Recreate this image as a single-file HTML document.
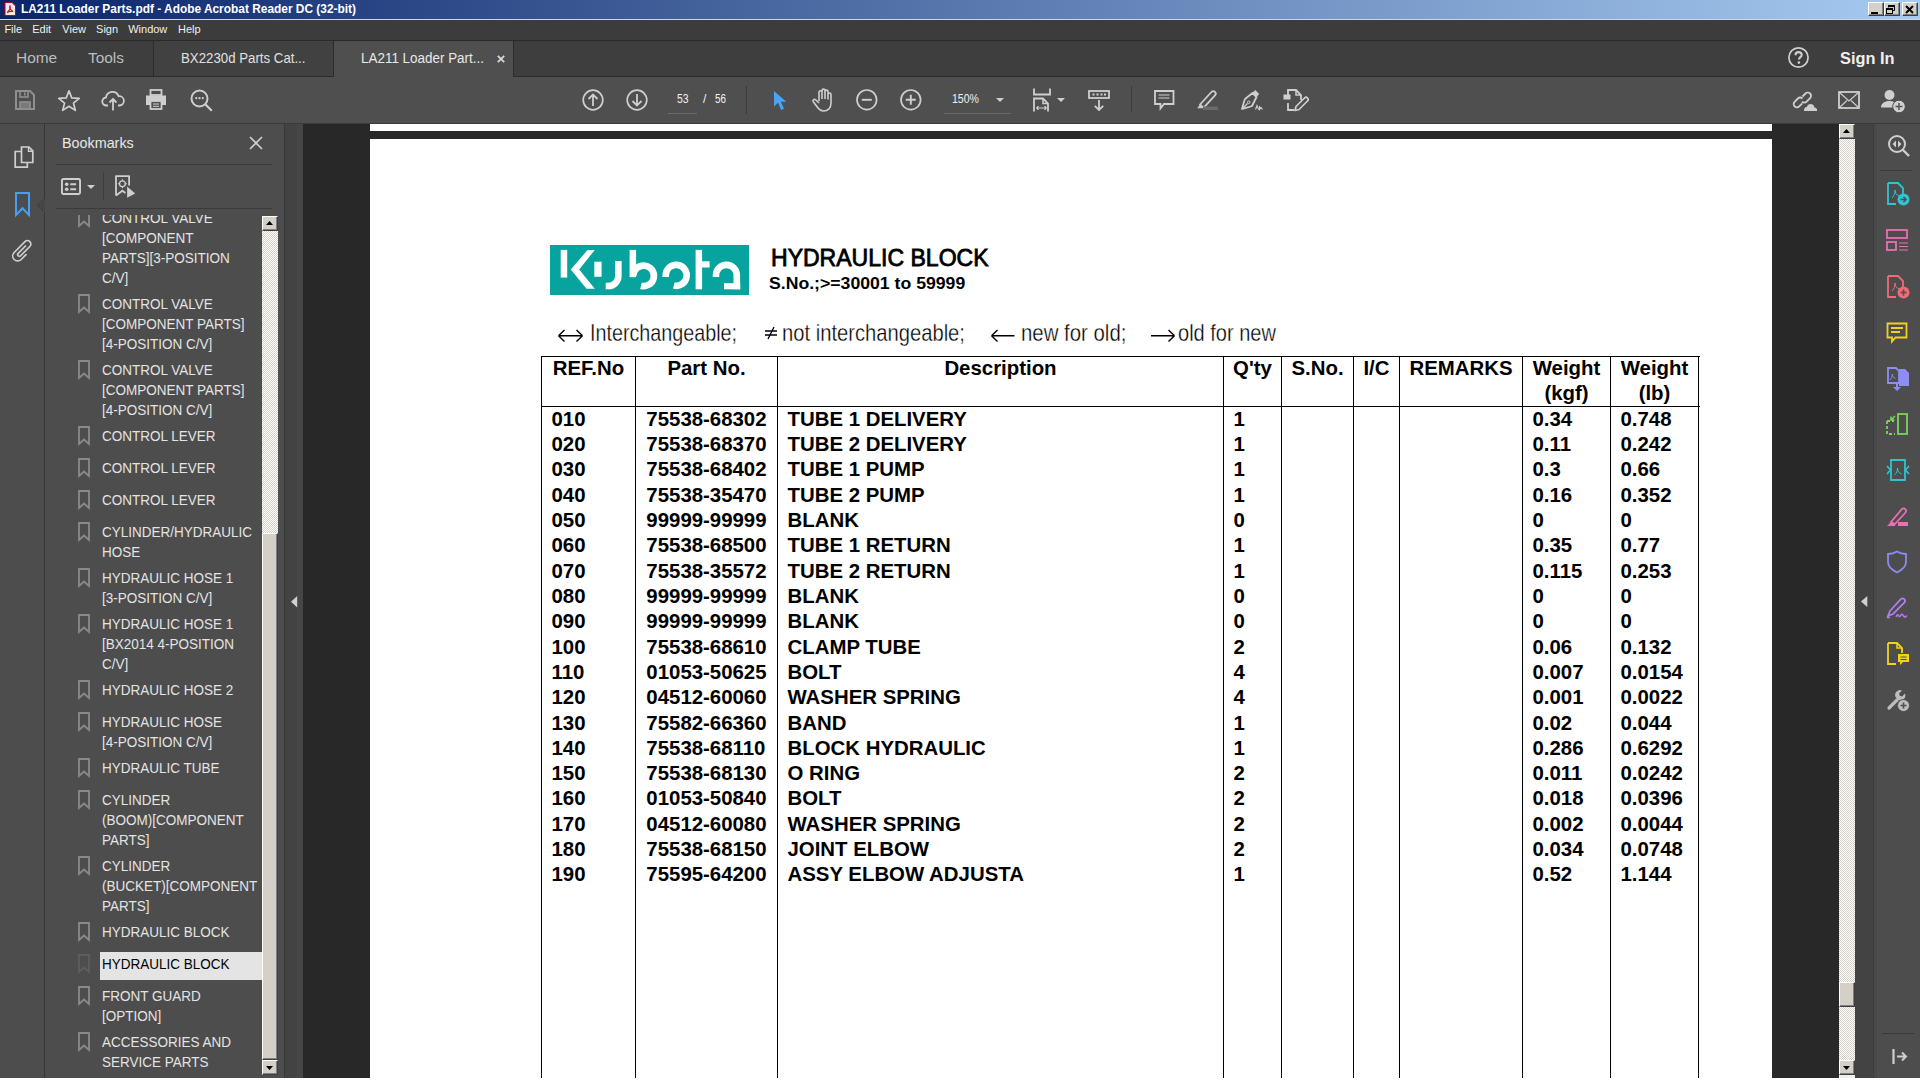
<!DOCTYPE html><html><head><meta charset="utf-8"><style>
*{box-sizing:border-box;margin:0;padding:0}
html,body{width:1920px;height:1080px;overflow:hidden;background:#f0f0f0;font-family:"Liberation Sans",sans-serif}
.a{position:absolute}
.t{position:absolute;white-space:nowrap;line-height:1}
svg{position:absolute;overflow:visible}
</style></head><body><div class="a" style="left:0px;top:0px;width:1920px;height:19px;background:linear-gradient(90deg,#0a246a 0%,#a6caf0 100%)"></div>
<div class="a" style="left:0px;top:19px;width:1920px;height:1px;background:#c8d8ec"></div>
<svg style="left:4px;top:2px" width="12" height="14" viewBox="0 0 12 14"><path d="M1 0.5h7l3.5 3.5v9.5h-10.5z" fill="#fbe7e7" stroke="#b0080f" stroke-width="1"/><path d="M3 10.5c2-1 4-4.5 3-6.5c-1 1 0 4 3 5.5c-2-0.3-4 0-6 1z" fill="none" stroke="#d4141c" stroke-width="1.2"/></svg>
<div class="t" style="left:20.5px;top:3.14px;font-size:12px;color:#fff;font-weight:bold;transform:scaleX(0.9915349553069318);transform-origin:0 0;letter-spacing:0px">LA211 Loader Parts.pdf - Adobe Acrobat Reader DC (32-bit)</div>
<div class="a" style="left:1868px;top:2px;width:16px;height:14px;background:#d4d0c8;border-top:1px solid #fff;border-left:1px solid #fff;border-right:1px solid #404040;border-bottom:1px solid #404040;box-shadow:inset -1px -1px #808080"></div>
<div class="a" style="left:1884px;top:2px;width:16px;height:14px;background:#d4d0c8;border-top:1px solid #fff;border-left:1px solid #fff;border-right:1px solid #404040;border-bottom:1px solid #404040;box-shadow:inset -1px -1px #808080"></div>
<div class="a" style="left:1902px;top:2px;width:16px;height:14px;background:#d4d0c8;border-top:1px solid #fff;border-left:1px solid #fff;border-right:1px solid #404040;border-bottom:1px solid #404040;box-shadow:inset -1px -1px #808080"></div>
<div class="a" style="left:1871px;top:12px;width:7px;height:2px;background:#000"></div>
<svg style="left:1886px;top:5px" width="9" height="9" viewBox="0 0 9 9"><path d="M2.5 0.5h6v5h-2 M2.5 0.5v2" fill="none" stroke="#000" stroke-width="1"/><rect x="2" y="0" width="7" height="2" fill="#000"/><rect x="0.5" y="3.5" width="6" height="5" fill="none" stroke="#000"/><rect x="0" y="3" width="7" height="2" fill="#000"/></svg>
<svg style="left:1905px;top:4.5px" width="9" height="9" viewBox="0 0 9 9"><path d="M1 1L8 8M8 1L1 8" stroke="#000" stroke-width="2"/></svg>
<div class="a" style="left:0px;top:20px;width:1920px;height:20px;background:#3c3c3c"></div>
<div class="a" style="left:0px;top:40px;width:1920px;height:1px;background:#2a2a2a"></div>
<div class="t" style="left:4.4px;top:23.55px;font-size:11px;color:#f0f0f0;font-weight:normal;">File</div>
<div class="t" style="left:32.2px;top:23.55px;font-size:11px;color:#f0f0f0;font-weight:normal;">Edit</div>
<div class="t" style="left:62.300000000000004px;top:23.55px;font-size:11px;color:#f0f0f0;font-weight:normal;">View</div>
<div class="t" style="left:96.10000000000001px;top:23.55px;font-size:11px;color:#f0f0f0;font-weight:normal;">Sign</div>
<div class="t" style="left:128.2px;top:23.55px;font-size:11px;color:#f0f0f0;font-weight:normal;">Window</div>
<div class="t" style="left:178.0px;top:23.55px;font-size:11px;color:#f0f0f0;font-weight:normal;">Help</div>
<div class="a" style="left:0px;top:41px;width:1920px;height:36px;background:#3e3e3e"></div>
<div class="a" style="left:0px;top:76px;width:1920px;height:1px;background:#2c2c2c"></div>
<div class="t" style="left:16.3px;top:49.92px;font-size:15px;color:#bdbdbd;font-weight:normal;transform:scaleX(1.0287141073657928);transform-origin:0 0;">Home</div>
<div class="t" style="left:88px;top:49.92px;font-size:15px;color:#bdbdbd;font-weight:normal;transform:scaleX(1.0278372591006424);transform-origin:0 0;">Tools</div>
<div class="a" style="left:153px;top:41px;width:1px;height:36px;background:#2c2c2c"></div>
<div class="a" style="left:154px;top:41px;width:180px;height:35px;background:#414141"></div>
<div class="t" style="left:181.3px;top:51.13px;font-size:14px;color:#e0e0e0;font-weight:normal;transform:scaleX(0.9465521173876682);transform-origin:0 0;">BX2230d Parts Cat...</div>
<div class="a" style="left:333px;top:41px;width:1px;height:36px;background:#2c2c2c"></div>
<div class="a" style="left:334px;top:41px;width:179px;height:37px;background:#4f4f4f"></div>
<div class="t" style="left:361px;top:51.13px;font-size:14px;color:#e8e8e8;font-weight:normal;transform:scaleX(0.9596629476476556);transform-origin:0 0;">LA211 Loader Part...</div>
<svg style="left:497px;top:54.5px" width="8" height="8" viewBox="0 0 8 8"><path d="M0.8 0.8L7.2 7.2M7.2 0.8L0.8 7.2" stroke="#d8d8d8" stroke-width="1.8"/></svg>
<div class="a" style="left:513px;top:41px;width:1px;height:36px;background:#2c2c2c"></div>
<svg style="left:1788px;top:47px" width="22" height="22" viewBox="0 0 22 22"><circle cx="10.5" cy="10.5" r="9.6" fill="none" stroke="#cfcfcf" stroke-width="1.7"/><path d="M7.5 8.2c0-1.9 1.3-3.1 3.1-3.1s3.1 1.1 3.1 2.8c0 2.2-2.7 2.3-2.7 4.5" fill="none" stroke="#cfcfcf" stroke-width="2.1"/><circle cx="10.9" cy="15.6" r="1.3" fill="#cfcfcf"/></svg>
<div class="t" style="left:1839.5px;top:51.32px;font-size:16px;color:#f0f0f0;font-weight:bold;transform:scaleX(1.0208333333333333);transform-origin:0 0;">Sign In</div>
<div class="a" style="left:0px;top:77px;width:1920px;height:46px;background:#4f4f4f"></div>
<div class="a" style="left:0px;top:123px;width:1920px;height:1px;background:#3a3a3a"></div>
<svg style="left:15px;top:90px" width="20" height="20" viewBox="0 0 20 20"><path d="M1 1h14l4 4v14h-18z" fill="none" stroke="#8f8f8f" stroke-width="2"/><rect x="5" y="1" width="8" height="6" fill="none" stroke="#8f8f8f" stroke-width="1.6"/><rect x="9" y="2.5" width="1.6" height="3" fill="#8f8f8f"/><rect x="5" y="12" width="10" height="7" fill="#7a7a7a" stroke="#8f8f8f" stroke-width="1.6"/></svg>
<svg style="left:57px;top:88.6px" width="24" height="23" viewBox="0 0 24 23"><path d="M12 1.8l2.75 7.1 7.5 0.45-5.8 4.75 1.9 7.3-6.35-4.1-6.35 4.1 1.9-7.3-5.8-4.75 7.5-0.45z" fill="none" stroke="#cfcfcf" stroke-width="1.7" stroke-linejoin="round"/></svg>
<svg style="left:102px;top:90px" width="22" height="21" viewBox="0 0 22 21"><path d="M6 15.5h-1.5a4 4 0 0 1-0.5-8a6.5 6.5 0 0 1 12.6-1.3a4.6 4.6 0 0 1 1.2 9.3h-1.8" fill="none" stroke="#cfcfcf" stroke-width="1.8"/><path d="M11 20.5v-11M7.5 12.5l3.5-3.5 3.5 3.5" fill="none" stroke="#cfcfcf" stroke-width="1.8"/></svg>
<svg style="left:145px;top:89px" width="22" height="21" viewBox="0 0 22 21"><rect x="5.5" y="1" width="11" height="5" fill="none" stroke="#cfcfcf" stroke-width="1.8"/><path d="M4.5 16h-3.5v-9.5h20v9.5h-3.5" fill="#cfcfcf"/><rect x="5.5" y="12" width="11" height="8" fill="#4f4f4f" stroke="#cfcfcf" stroke-width="1.8"/><path d="M8 15h6M8 17.3h6" stroke="#cfcfcf" stroke-width="1"/></svg>
<svg style="left:190px;top:89px" width="23" height="23" viewBox="0 0 23 23"><circle cx="9.5" cy="9.5" r="8" fill="none" stroke="#cfcfcf" stroke-width="2"/><path d="M15.3 15.3l6.5 6.5" stroke="#cfcfcf" stroke-width="2.2"/><circle cx="6.3" cy="9.2" r="1.1" fill="#cfcfcf"/><circle cx="9.5" cy="9.2" r="1.1" fill="#cfcfcf"/><circle cx="12.7" cy="9.2" r="1.1" fill="#cfcfcf"/></svg>
<svg style="left:582px;top:89px" width="22" height="22" viewBox="0 0 22 22"><circle cx="11" cy="11" r="9.8" fill="none" stroke="#cfcfcf" stroke-width="1.7"/><path d="M11 17V5.5M6.5 10l4.5-4.5 4.5 4.5" fill="none" stroke="#cfcfcf" stroke-width="1.8"/></svg>
<svg style="left:626px;top:89px" width="22" height="22" viewBox="0 0 22 22"><circle cx="11" cy="11" r="9.8" fill="none" stroke="#cfcfcf" stroke-width="1.7"/><path d="M11 5v11.5M6.5 12l4.5 4.5 4.5-4.5" fill="none" stroke="#cfcfcf" stroke-width="1.8"/></svg>
<div class="t" style="left:677px;top:92.94px;font-size:12px;color:#f0f0f0;font-weight:normal;transform:scaleX(0.8708708708708708);transform-origin:0 0;">53</div>
<div class="a" style="left:668px;top:113px;width:29px;height:1px;background:#6a6a6a"></div>
<div class="t" style="left:703px;top:92.94px;font-size:12px;color:#f0f0f0;font-weight:normal;">/</div>
<div class="t" style="left:714.6px;top:92.94px;font-size:12px;color:#f0f0f0;font-weight:normal;transform:scaleX(0.8258258258258258);transform-origin:0 0;">56</div>
<div class="a" style="left:746px;top:86px;width:1px;height:28px;background:#3c3c3c"></div>
<svg style="left:773px;top:89.5px" width="14" height="21" viewBox="0 0 14 21"><path d="M1 1v15.5l4-3.8 3.2 7.3 2.8-1.2-3.1-7h5.5z" fill="#4aa3f5"/></svg>
<svg style="left:812px;top:88px" width="22" height="24" viewBox="0 0 22 24"><path d="M7 13V4.2a1.5 1.5 0 0 1 3 0V11M10 11V2.6a1.5 1.5 0 0 1 3 0V11M13 11V3.6a1.5 1.5 0 0 1 3 0V11.5M16 11.5V6.5a1.5 1.5 0 0 1 3 0v8.5c0 5-3 8-7.5 8c-3.5 0-5-2-7-5l-3.2-4.3a1.5 1.5 0 0 1 2.3-1.9L7 15" fill="none" stroke="#cfcfcf" stroke-width="1.6" stroke-linejoin="round"/></svg>
<svg style="left:856px;top:89px" width="22" height="22" viewBox="0 0 22 22"><circle cx="10.8" cy="10.8" r="9.8" fill="none" stroke="#cfcfcf" stroke-width="1.7"/><path d="M5.8 10.8h10" stroke="#cfcfcf" stroke-width="1.9"/></svg>
<svg style="left:900px;top:89px" width="22" height="22" viewBox="0 0 22 22"><circle cx="10.8" cy="10.8" r="9.8" fill="none" stroke="#cfcfcf" stroke-width="1.7"/><path d="M5.8 10.8h10M10.8 5.8v10" stroke="#cfcfcf" stroke-width="1.9"/></svg>
<div class="t" style="left:951.8px;top:92.94px;font-size:12px;color:#f0f0f0;font-weight:normal;transform:scaleX(0.87890625);transform-origin:0 0;">150%</div>
<svg style="left:996px;top:98px" width="8" height="4" viewBox="0 0 8 4"><path d="M0 0h8l-4 4z" fill="#cfcfcf"/></svg>
<div class="a" style="left:944px;top:113px;width:67px;height:1px;background:#6a6a6a"></div>
<svg style="left:1033px;top:88px" width="18" height="24" viewBox="0 0 18 24"><path d="M1 0.5v6h16v-6" fill="none" stroke="#cfcfcf" stroke-width="1.8"/><path d="M1 23.5v-13h9l5 5v8" fill="none" stroke="#cfcfcf" stroke-width="1.8"/><path d="M10 10.5v5h5" fill="none" stroke="#cfcfcf" stroke-width="1.5"/><path d="M3.5 20h10M3.5 20l2-1.8M3.5 20l2 1.8M13.5 20l-2-1.8M13.5 20l-2 1.8" stroke="#cfcfcf" stroke-width="1.2"/></svg>
<svg style="left:1057px;top:98px" width="8" height="4" viewBox="0 0 8 4"><path d="M0 0h8l-4 4z" fill="#cfcfcf"/></svg>
<svg style="left:1088px;top:90px" width="22" height="21" viewBox="0 0 22 21"><rect x="1" y="1" width="20" height="7" fill="none" stroke="#cfcfcf" stroke-width="1.8"/><path d="M4.5 4.5h2M8.5 4.5h2M12.5 4.5h2M16 4.5h2" stroke="#cfcfcf" stroke-width="2"/><path d="M11 10v10M6.8 15.8l4.2 4.2 4.2-4.2" fill="none" stroke="#cfcfcf" stroke-width="1.8"/></svg>
<div class="a" style="left:1131px;top:86px;width:1px;height:26px;background:#3c3c3c"></div>
<svg style="left:1154px;top:90px" width="21" height="21" viewBox="0 0 21 21"><path d="M1 1h18.5v13h-9.5l-3.5 4.5v-4.5h-5.5z" fill="none" stroke="#cfcfcf" stroke-width="1.8" stroke-linejoin="miter"/><path d="M4.5 5h11M4.5 8h11" stroke="#cfcfcf" stroke-width="1.2"/></svg>
<svg style="left:1196px;top:89px" width="23" height="22" viewBox="0 0 23 22"><path d="M4 15.5L15.5 3a2.4 2.4 0 0 1 3.5 3.3L7.5 18.8z" fill="none" stroke="#cfcfcf" stroke-width="1.8" stroke-linejoin="round"/><path d="M4 15.5l-2.8 3.8h5.3" fill="#cfcfcf"/><rect x="7" y="17.5" width="15" height="3.5" fill="#6b6b6b"/></svg>
<svg style="left:1240px;top:88.5px" width="23" height="22" viewBox="0 0 23 22"><path d="M12.5 4l4 4-4.5 9c-3 1.3-6.5 2-10 3 1-3.5 1.7-7 3-10z" fill="none" stroke="#cfcfcf" stroke-width="1.8" stroke-linejoin="round"/><path d="M12.5 4l2.7-3 4 4-2.7 3" fill="#cfcfcf"/><path d="M2.5 19.5l5-5" stroke="#cfcfcf" stroke-width="1.2"/><circle cx="8.7" cy="13.3" r="1.3" fill="none" stroke="#cfcfcf" stroke-width="1"/><path d="M15.5 20.5l1.5-4 1.5 4M19.5 17v3.5l1.5-2 1.5 2" fill="none" stroke="#cfcfcf" stroke-width="1.1"/></svg>
<svg style="left:1283px;top:89px" width="25" height="23" viewBox="0 0 25 23"><path d="M5 6V1h8l5 5v5" fill="none" stroke="#cfcfcf" stroke-width="1.8"/><path d="M13 1v5h5" fill="none" stroke="#cfcfcf" stroke-width="1.5"/><rect x="0.5" y="5.5" width="7" height="5" fill="#cfcfcf"/><path d="M5 14v7h6" fill="none" stroke="#cfcfcf" stroke-width="1.8"/><path d="M12 21.5l1-4 8.5-8.5a1.5 1.5 0 0 1 3 3l-8.5 8.5z" fill="none" stroke="#cfcfcf" stroke-width="1.7" stroke-linejoin="round"/></svg>
<svg style="left:1793px;top:89px" width="25" height="22" viewBox="0 0 25 22"><path d="M9.5 7.5l3-3a3.2 3.2 0 0 1 4.6 4.6l-3.5 3.5a3.2 3.2 0 0 1-4.6 0" fill="none" stroke="#cfcfcf" stroke-width="1.8"/><path d="M9.5 9.5a3.2 3.2 0 0 0-4.6 0l-3.3 3.3a3.2 3.2 0 0 0 4.6 4.6l3-3" fill="none" stroke="#cfcfcf" stroke-width="1.8"/><path d="M11 22h13c0.5-2.2-0.8-3.6-2.6-3.6c-0.4-2.2-2-3.3-3.8-3.3c-1.8 0-3.3 1.2-3.7 3c-1.8-0.2-3.1 1.7-2.9 3.9z" fill="#cfcfcf"/></svg>
<svg style="left:1838px;top:90.5px" width="22" height="18" viewBox="0 0 22 18"><rect x="1" y="1" width="20" height="16" fill="none" stroke="#cfcfcf" stroke-width="1.8"/><path d="M1.5 1.5L11 10l9.5-8.5M1.5 16.5l7.5-7M20.5 16.5l-7.5-7" fill="none" stroke="#cfcfcf" stroke-width="1.1"/></svg>
<svg style="left:1881px;top:88.5px" width="25" height="24" viewBox="0 0 25 24"><circle cx="8.5" cy="6" r="5" fill="#cfcfcf"/><path d="M0 18.5c0-4 3.5-6.5 8.5-6.5c2.3 0 4.3 0.6 5.6 1.6c-1.6 1.2-2.3 3-2.3 4.9z" fill="#cfcfcf"/><circle cx="18" cy="17.5" r="6.3" fill="#cfcfcf" stroke="#4f4f4f" stroke-width="1"/><path d="M18 14v7M14.5 17.5h7" stroke="#555" stroke-width="1.5"/></svg>
<div class="a" style="left:0px;top:124px;width:44px;height:954px;background:#4d4d4d"></div>
<div class="a" style="left:44px;top:124px;width:1px;height:954px;background:#363636"></div>
<div class="a" style="left:45px;top:124px;width:239px;height:954px;background:#4d4d4d"></div>
<div class="a" style="left:284px;top:124px;width:19px;height:954px;background:#434343"></div>
<div class="a" style="left:284px;top:124px;width:1px;height:954px;background:#373737"></div>
<div class="a" style="left:297px;top:124px;width:6px;height:954px;background:#464646"></div>
<svg style="left:14px;top:146px" width="20" height="23" viewBox="0 0 20 23"><path d="M7.5 1h7.5l3.8 3.8V16.5H7.5z" fill="none" stroke="#cfcfcf" stroke-width="1.7"/><path d="M14.5 1v4.3h4.3" fill="none" stroke="#cfcfcf" stroke-width="1.4"/><path d="M7 5.5H1.2V21.2H13.3V17" fill="none" stroke="#cfcfcf" stroke-width="1.7"/></svg>
<svg style="left:15px;top:192px" width="15" height="24" viewBox="0 0 15 24"><path d="M1 1h13v22l-6.5-6.8-6.5 6.8z" fill="none" stroke="#45a0f2" stroke-width="2"/></svg>
<svg style="left:37px;top:198px" width="8" height="15" viewBox="0 0 8 15"><path d="M8 0L0.5 7.5 8 15" fill="#464646" stroke="#3f3f3f" stroke-width="1"/></svg>
<svg style="left:9.5px;top:236.5px" width="24" height="25" viewBox="0 0 24 25"><g transform="translate(12 12.5) rotate(45) scale(0.9)"><path d="M0 -5.5V6A1.9 1.9 0 0 0 3.8 6V-8.5A3.8 3.8 0 0 0 -3.8 -8.5V8.5A5.5 5.5 0 0 0 7.2 8.5V1" fill="none" stroke="#cfcfcf" stroke-width="1.9" stroke-linecap="round"/></g></svg>
<div class="t" style="left:61.6px;top:135.78px;font-size:14.5px;color:#e8e8e8;font-weight:normal;transform:scaleX(0.9889655172413794);transform-origin:0 0;">Bookmarks</div>
<svg style="left:249px;top:136px" width="14" height="14" viewBox="0 0 14 14"><path d="M1 1L13 13M13 1L1 13" stroke="#d0d0d0" stroke-width="1.7"/></svg>
<div class="a" style="left:56px;top:164px;width:216px;height:1px;background:#3a3a3a"></div>
<svg style="left:61px;top:178px" width="20" height="17" viewBox="0 0 20 17"><rect x="0.95" y="0.95" width="18.1" height="15.1" rx="1.5" fill="none" stroke="#cfcfcf" stroke-width="1.9"/><circle cx="5.7" cy="6.2" r="1.8" fill="#cfcfcf"/><circle cx="5.7" cy="11.2" r="1.8" fill="#cfcfcf"/><path d="M9.3 6.2h5.8M9.3 11.2h5.8" stroke="#cfcfcf" stroke-width="2"/></svg>
<svg style="left:86.5px;top:185px" width="8" height="4" viewBox="0 0 8 4"><path d="M0 0h8l-4 4z" fill="#cfcfcf"/></svg>
<div class="a" style="left:103px;top:172px;width:1px;height:28px;background:#3c3c3c"></div>
<svg style="left:114px;top:175px" width="22" height="24" viewBox="0 0 22 24"><path d="M2 20.5V1.1h13.1v9.5" fill="none" stroke="#cfcfcf" stroke-width="1.8" stroke-linejoin="round"/><path d="M2 20.5l6.4-4.8 3 2.3" fill="none" stroke="#cfcfcf" stroke-width="1.8" stroke-linejoin="round"/><circle cx="8.4" cy="8.75" r="2.9" fill="none" stroke="#cfcfcf" stroke-width="1.3"/><path d="M8.4 4.3v1.6M8.4 11.6v1.6M3.9 8.75h1.6M11.3 8.75h1.6" stroke="#cfcfcf" stroke-width="1.1"/><path d="M13.1 11.4L21.2 18.4L13.1 22.8z" fill="#cfcfcf"/></svg>
<div class="a" style="left:56px;top:208px;width:216px;height:1px;background:#3a3a3a"></div>
<div class="a" style="left:45px;top:215px;width:217px;height:862px;overflow:hidden">
<svg style="left:33px;top:-7px" width="12" height="19" viewBox="0 0 12 19"><path d="M1 1h10v17l-5-4.5-5 4.5z" fill="none" stroke="#8a8a8a" stroke-width="1.8"/></svg>
<div class="t" style="left:56.8px;top:-5.27px;font-size:15px;color:#e4e4e4;transform:scaleX(0.9000);transform-origin:0 0">CONTROL VALVE</div>
<div class="t" style="left:56.8px;top:14.73px;font-size:15px;color:#e4e4e4;transform:scaleX(0.9000);transform-origin:0 0">[COMPONENT</div>
<div class="t" style="left:56.8px;top:34.73px;font-size:15px;color:#e4e4e4;transform:scaleX(0.9000);transform-origin:0 0">PARTS][3-POSITION</div>
<div class="t" style="left:56.8px;top:54.73px;font-size:15px;color:#e4e4e4;transform:scaleX(0.9000);transform-origin:0 0">C/V]</div>
<svg style="left:33px;top:79px" width="12" height="19" viewBox="0 0 12 19"><path d="M1 1h10v17l-5-4.5-5 4.5z" fill="none" stroke="#8a8a8a" stroke-width="1.8"/></svg>
<div class="t" style="left:56.8px;top:80.73px;font-size:15px;color:#e4e4e4;transform:scaleX(0.9000);transform-origin:0 0">CONTROL VALVE</div>
<div class="t" style="left:56.8px;top:100.73px;font-size:15px;color:#e4e4e4;transform:scaleX(0.9000);transform-origin:0 0">[COMPONENT PARTS]</div>
<div class="t" style="left:56.8px;top:120.73px;font-size:15px;color:#e4e4e4;transform:scaleX(0.9000);transform-origin:0 0">[4-POSITION C/V]</div>
<svg style="left:33px;top:145px" width="12" height="19" viewBox="0 0 12 19"><path d="M1 1h10v17l-5-4.5-5 4.5z" fill="none" stroke="#8a8a8a" stroke-width="1.8"/></svg>
<div class="t" style="left:56.8px;top:146.73px;font-size:15px;color:#e4e4e4;transform:scaleX(0.9000);transform-origin:0 0">CONTROL VALVE</div>
<div class="t" style="left:56.8px;top:166.73px;font-size:15px;color:#e4e4e4;transform:scaleX(0.9000);transform-origin:0 0">[COMPONENT PARTS]</div>
<div class="t" style="left:56.8px;top:186.73px;font-size:15px;color:#e4e4e4;transform:scaleX(0.9000);transform-origin:0 0">[4-POSITION C/V]</div>
<svg style="left:33px;top:211px" width="12" height="19" viewBox="0 0 12 19"><path d="M1 1h10v17l-5-4.5-5 4.5z" fill="none" stroke="#8a8a8a" stroke-width="1.8"/></svg>
<div class="t" style="left:56.8px;top:212.73px;font-size:15px;color:#e4e4e4;transform:scaleX(0.9000);transform-origin:0 0">CONTROL LEVER</div>
<svg style="left:33px;top:243px" width="12" height="19" viewBox="0 0 12 19"><path d="M1 1h10v17l-5-4.5-5 4.5z" fill="none" stroke="#8a8a8a" stroke-width="1.8"/></svg>
<div class="t" style="left:56.8px;top:244.73px;font-size:15px;color:#e4e4e4;transform:scaleX(0.9000);transform-origin:0 0">CONTROL LEVER</div>
<svg style="left:33px;top:275px" width="12" height="19" viewBox="0 0 12 19"><path d="M1 1h10v17l-5-4.5-5 4.5z" fill="none" stroke="#8a8a8a" stroke-width="1.8"/></svg>
<div class="t" style="left:56.8px;top:276.73px;font-size:15px;color:#e4e4e4;transform:scaleX(0.9000);transform-origin:0 0">CONTROL LEVER</div>
<svg style="left:33px;top:307px" width="12" height="19" viewBox="0 0 12 19"><path d="M1 1h10v17l-5-4.5-5 4.5z" fill="none" stroke="#8a8a8a" stroke-width="1.8"/></svg>
<div class="t" style="left:56.8px;top:308.72px;font-size:15px;color:#e4e4e4;transform:scaleX(0.9000);transform-origin:0 0">CYLINDER/HYDRAULIC</div>
<div class="t" style="left:56.8px;top:328.72px;font-size:15px;color:#e4e4e4;transform:scaleX(0.9000);transform-origin:0 0">HOSE</div>
<svg style="left:33px;top:353px" width="12" height="19" viewBox="0 0 12 19"><path d="M1 1h10v17l-5-4.5-5 4.5z" fill="none" stroke="#8a8a8a" stroke-width="1.8"/></svg>
<div class="t" style="left:56.8px;top:354.72px;font-size:15px;color:#e4e4e4;transform:scaleX(0.9000);transform-origin:0 0">HYDRAULIC HOSE 1</div>
<div class="t" style="left:56.8px;top:374.72px;font-size:15px;color:#e4e4e4;transform:scaleX(0.9000);transform-origin:0 0">[3-POSITION C/V]</div>
<svg style="left:33px;top:399px" width="12" height="19" viewBox="0 0 12 19"><path d="M1 1h10v17l-5-4.5-5 4.5z" fill="none" stroke="#8a8a8a" stroke-width="1.8"/></svg>
<div class="t" style="left:56.8px;top:400.72px;font-size:15px;color:#e4e4e4;transform:scaleX(0.9000);transform-origin:0 0">HYDRAULIC HOSE 1</div>
<div class="t" style="left:56.8px;top:420.72px;font-size:15px;color:#e4e4e4;transform:scaleX(0.9000);transform-origin:0 0">[BX2014 4-POSITION</div>
<div class="t" style="left:56.8px;top:440.72px;font-size:15px;color:#e4e4e4;transform:scaleX(0.9000);transform-origin:0 0">C/V]</div>
<svg style="left:33px;top:465px" width="12" height="19" viewBox="0 0 12 19"><path d="M1 1h10v17l-5-4.5-5 4.5z" fill="none" stroke="#8a8a8a" stroke-width="1.8"/></svg>
<div class="t" style="left:56.8px;top:466.72px;font-size:15px;color:#e4e4e4;transform:scaleX(0.9000);transform-origin:0 0">HYDRAULIC HOSE 2</div>
<svg style="left:33px;top:497px" width="12" height="19" viewBox="0 0 12 19"><path d="M1 1h10v17l-5-4.5-5 4.5z" fill="none" stroke="#8a8a8a" stroke-width="1.8"/></svg>
<div class="t" style="left:56.8px;top:498.72px;font-size:15px;color:#e4e4e4;transform:scaleX(0.9000);transform-origin:0 0">HYDRAULIC HOSE</div>
<div class="t" style="left:56.8px;top:518.72px;font-size:15px;color:#e4e4e4;transform:scaleX(0.9000);transform-origin:0 0">[4-POSITION C/V]</div>
<svg style="left:33px;top:543px" width="12" height="19" viewBox="0 0 12 19"><path d="M1 1h10v17l-5-4.5-5 4.5z" fill="none" stroke="#8a8a8a" stroke-width="1.8"/></svg>
<div class="t" style="left:56.8px;top:544.72px;font-size:15px;color:#e4e4e4;transform:scaleX(0.9000);transform-origin:0 0">HYDRAULIC TUBE</div>
<svg style="left:33px;top:575px" width="12" height="19" viewBox="0 0 12 19"><path d="M1 1h10v17l-5-4.5-5 4.5z" fill="none" stroke="#8a8a8a" stroke-width="1.8"/></svg>
<div class="t" style="left:56.8px;top:576.72px;font-size:15px;color:#e4e4e4;transform:scaleX(0.9000);transform-origin:0 0">CYLINDER</div>
<div class="t" style="left:56.8px;top:596.72px;font-size:15px;color:#e4e4e4;transform:scaleX(0.9000);transform-origin:0 0">(BOOM)[COMPONENT</div>
<div class="t" style="left:56.8px;top:616.72px;font-size:15px;color:#e4e4e4;transform:scaleX(0.9000);transform-origin:0 0">PARTS]</div>
<svg style="left:33px;top:641px" width="12" height="19" viewBox="0 0 12 19"><path d="M1 1h10v17l-5-4.5-5 4.5z" fill="none" stroke="#8a8a8a" stroke-width="1.8"/></svg>
<div class="t" style="left:56.8px;top:642.72px;font-size:15px;color:#e4e4e4;transform:scaleX(0.9000);transform-origin:0 0">CYLINDER</div>
<div class="t" style="left:56.8px;top:662.72px;font-size:15px;color:#e4e4e4;transform:scaleX(0.9000);transform-origin:0 0">(BUCKET)[COMPONENT</div>
<div class="t" style="left:56.8px;top:682.72px;font-size:15px;color:#e4e4e4;transform:scaleX(0.9000);transform-origin:0 0">PARTS]</div>
<svg style="left:33px;top:707px" width="12" height="19" viewBox="0 0 12 19"><path d="M1 1h10v17l-5-4.5-5 4.5z" fill="none" stroke="#8a8a8a" stroke-width="1.8"/></svg>
<div class="t" style="left:56.8px;top:708.72px;font-size:15px;color:#e4e4e4;transform:scaleX(0.9000);transform-origin:0 0">HYDRAULIC BLOCK</div>
<div class="a" style="left:55px;top:737px;width:162px;height:28px;background:#e4e4e4"></div>
<svg style="left:33px;top:739px" width="12" height="19" viewBox="0 0 12 19"><path d="M1 1h10v17l-5-4.5-5 4.5z" fill="none" stroke="#5e5e5e" stroke-width="1.8"/></svg>
<div class="t" style="left:56.8px;top:740.72px;font-size:15px;color:#000;transform:scaleX(0.9000);transform-origin:0 0">HYDRAULIC BLOCK</div>
<svg style="left:33px;top:771px" width="12" height="19" viewBox="0 0 12 19"><path d="M1 1h10v17l-5-4.5-5 4.5z" fill="none" stroke="#8a8a8a" stroke-width="1.8"/></svg>
<div class="t" style="left:56.8px;top:772.72px;font-size:15px;color:#e4e4e4;transform:scaleX(0.9000);transform-origin:0 0">FRONT GUARD</div>
<div class="t" style="left:56.8px;top:792.72px;font-size:15px;color:#e4e4e4;transform:scaleX(0.9000);transform-origin:0 0">[OPTION]</div>
<svg style="left:33px;top:817px" width="12" height="19" viewBox="0 0 12 19"><path d="M1 1h10v17l-5-4.5-5 4.5z" fill="none" stroke="#8a8a8a" stroke-width="1.8"/></svg>
<div class="t" style="left:56.8px;top:818.72px;font-size:15px;color:#e4e4e4;transform:scaleX(0.9000);transform-origin:0 0">ACCESSORIES AND</div>
<div class="t" style="left:56.8px;top:838.72px;font-size:15px;color:#e4e4e4;transform:scaleX(0.9000);transform-origin:0 0">SERVICE PARTS</div>
</div>
<div class="a" style="left:262px;top:216px;width:16px;height:844px;background-color:#ffffff;background-image:linear-gradient(45deg,#d4d0c8 25%,transparent 25%,transparent 75%,#d4d0c8 75%),linear-gradient(45deg,#d4d0c8 25%,transparent 25%,transparent 75%,#d4d0c8 75%);background-size:2px 2px;background-position:0 0,1px 1px"></div>
<div class="a" style="left:262px;top:216px;width:16px;height:15px;background:#d4d0c8;border-top:1px solid #fff;border-left:1px solid #fff;border-right:1px solid #404040;border-bottom:1px solid #404040;box-shadow:inset -1px -1px #808080"></div>
<svg style="left:266px;top:221px" width="7" height="4" viewBox="0 0 7 4"><path d="M3.5 0L7 4H0z" fill="#000"/></svg>
<div class="a" style="left:262px;top:533px;width:16px;height:527px;background:#d4d0c8;border-top:1px solid #fff;border-left:1px solid #fff;border-right:1px solid #404040;border-bottom:1px solid #404040;box-shadow:inset -1px -1px #808080"></div>
<div class="a" style="left:262px;top:1060px;width:16px;height:15px;background:#d4d0c8;border-top:1px solid #fff;border-left:1px solid #fff;border-right:1px solid #404040;border-bottom:1px solid #404040;box-shadow:inset -1px -1px #808080"></div>
<svg style="left:266px;top:1066px" width="7" height="4" viewBox="0 0 7 4"><path d="M0 0h7L3.5 4z" fill="#000"/></svg>
<svg style="left:291px;top:595.5px" width="6.2" height="11.5" viewBox="0 0 6.2 11.5"><path d="M6.2 0v11.5L0 5.75z" fill="#d0d0d0"/></svg>
<div class="a" style="left:303px;top:124px;width:1536px;height:954px;background:#282828"></div>
<div class="a" style="left:370px;top:124px;width:1402px;height:7px;background:#fff"></div>
<div class="a" style="left:370px;top:139px;width:1402px;height:939px;background:#fff"></div>
<div class="a" style="left:1839px;top:124px;width:16px;height:951px;background-color:#ffffff;background-image:linear-gradient(45deg,#d4d0c8 25%,transparent 25%,transparent 75%,#d4d0c8 75%),linear-gradient(45deg,#d4d0c8 25%,transparent 25%,transparent 75%,#d4d0c8 75%);background-size:2px 2px;background-position:0 0,1px 1px"></div>
<div class="a" style="left:1839px;top:124px;width:16px;height:15px;background:#d4d0c8;border-top:1px solid #fff;border-left:1px solid #fff;border-right:1px solid #404040;border-bottom:1px solid #404040;box-shadow:inset -1px -1px #808080"></div>
<svg style="left:1843px;top:129px" width="7" height="4" viewBox="0 0 7 4"><path d="M3.5 0L7 4H0z" fill="#000"/></svg>
<div class="a" style="left:1839px;top:982px;width:16px;height:25px;background:#d4d0c8;border-top:1px solid #fff;border-left:1px solid #fff;border-right:1px solid #404040;border-bottom:1px solid #404040;box-shadow:inset -1px -1px #808080"></div>
<div class="a" style="left:1839px;top:1060px;width:16px;height:15px;background:#d4d0c8;border-top:1px solid #fff;border-left:1px solid #fff;border-right:1px solid #404040;border-bottom:1px solid #404040;box-shadow:inset -1px -1px #808080"></div>
<svg style="left:1843px;top:1066px" width="7" height="4" viewBox="0 0 7 4"><path d="M0 0h7L3.5 4z" fill="#000"/></svg>
<div class="a" style="left:1855px;top:124px;width:19px;height:954px;background:#434343"></div>
<div class="a" style="left:1873px;top:124px;width:1px;height:954px;background:#3d3d3d"></div>
<div class="a" style="left:1874px;top:124px;width:46px;height:954px;background:#4d4d4d"></div>
<div class="a" style="left:1874px;top:124px;width:3px;height:954px;background:#494949"></div>
<svg style="left:1860.7px;top:596px" width="6.3" height="11" viewBox="0 0 6.3 11"><path d="M6.3 0v11L0 5.5z" fill="#d0d0d0"/></svg>
<svg style="left:550px;top:245px" width="199" height="50" viewBox="0 0 199 50">
<rect x="0" y="0" width="199" height="50" fill="#06a39f"/>
<g fill="#fff">
<rect x="10.7" y="4.9" width="6.5" height="27.7"/>
<path d="M37.5 4.9H44.8L29.2 24.5 44.8 43.8H36.5L20.8 24.5z"/>
<rect x="44.3" y="16.7" width="7.3" height="15.1"/>
<rect x="79.6" y="4.9" width="6.5" height="27.3"/>
<rect x="145.6" y="4.9" width="6.5" height="39.4"/>
<rect x="152" y="16.3" width="7.6" height="6.2"/>
<rect x="174" y="38.2" width="16.2" height="6.1"/>
</g>
<g fill="none" stroke="#fff" stroke-width="6.6">
<path d="M68.35 16.1V31A10 10 0 0 1 58.35 41H55.7"/>
<path d="M83.45 30.5A10.25 10.25 0 1 1 91 40.75"/>
<path d="M115.7 31.9V30.4A10.5 10.5 0 1 1 123.8 40.6"/>
<path d="M166 31.9V30.3A10.4 10.4 0 0 1 186.8 30.3V44.3"/>
</g>
</svg>
<div class="t" style="left:771.25px;top:246.69px;font-size:23px;color:#000;font-weight:normal;transform:scaleX(1.0012198770916287);transform-origin:0 0;-webkit-text-stroke:0.8px #000">HYDRAULIC BLOCK</div>
<div class="t" style="left:768.75px;top:274.62px;font-size:17px;color:#000;font-weight:bold;transform:scaleX(1.0381400761743547);transform-origin:0 0;">S.No.;&gt;=30001 to 59999</div>
<div class="t" style="left:589.5px;top:320.58px;font-size:24px;color:#000;font-weight:normal;transform:scaleX(0.8221476510067114);transform-origin:0 0;-webkit-text-stroke:0.35px #fff">Interchangeable;</div>
<div class="t" style="left:781.6px;top:320.58px;font-size:24px;color:#000;font-weight:normal;transform:scaleX(0.8411472697186982);transform-origin:0 0;-webkit-text-stroke:0.35px #fff">not interchangeable;</div>
<div class="t" style="left:1020.6px;top:320.58px;font-size:24px;color:#000;font-weight:normal;transform:scaleX(0.849451966473243);transform-origin:0 0;-webkit-text-stroke:0.35px #fff">new for old;</div>
<div class="t" style="left:1178.4px;top:320.58px;font-size:24px;color:#000;font-weight:normal;transform:scaleX(0.8341845420497107);transform-origin:0 0;-webkit-text-stroke:0.35px #fff">old for new</div>
<svg style="left:557px;top:329px" width="27" height="14" viewBox="0 0 27 14"><path d="M1.5 6.7h24M1.5 6.7l6-5.7M1.5 6.7l6 5.7M25.5 6.7l-6-5.7M25.5 6.7l-6 5.7" fill="none" stroke="#000" stroke-width="1.4"/></svg>
<svg style="left:764px;top:326px" width="14" height="14" viewBox="0 0 14 14"><path d="M1 5h12M1 9h12M10 1L4 13" fill="none" stroke="#000" stroke-width="1.3"/></svg>
<svg style="left:990px;top:329px" width="25" height="14" viewBox="0 0 25 14"><path d="M1.5 6.7h23M1.5 6.7l6-5.7M1.5 6.7l6 5.7" fill="none" stroke="#000" stroke-width="1.4"/></svg>
<svg style="left:1150px;top:329px" width="26" height="14" viewBox="0 0 26 14"><path d="M1 6.7h23.5M24.5 6.7l-6-5.7M24.5 6.7l-6 5.7" fill="none" stroke="#000" stroke-width="1.4"/></svg>
<div class="a" style="left:541px;top:356px;width:1159px;height:1px;background:#000"></div>
<div class="a" style="left:541px;top:406px;width:1159px;height:1px;background:#000"></div>
<div class="a" style="left:541px;top:356px;width:1px;height:722px;background:#000"></div>
<div class="a" style="left:635px;top:356px;width:1px;height:722px;background:#000"></div>
<div class="a" style="left:777px;top:356px;width:1px;height:722px;background:#000"></div>
<div class="a" style="left:1223px;top:356px;width:1px;height:722px;background:#000"></div>
<div class="a" style="left:1281px;top:356px;width:1px;height:722px;background:#000"></div>
<div class="a" style="left:1353px;top:356px;width:1px;height:722px;background:#000"></div>
<div class="a" style="left:1399px;top:356px;width:1px;height:722px;background:#000"></div>
<div class="a" style="left:1522px;top:356px;width:1px;height:722px;background:#000"></div>
<div class="a" style="left:1610px;top:356px;width:1px;height:722px;background:#000"></div>
<div class="a" style="left:1698px;top:356px;width:1px;height:722px;background:#000"></div>
<div class="t" style="left:552.8px;top:358.14px;font-size:20.4px;color:#000;font-weight:bold;">REF.No</div>
<div class="t" style="left:667.38px;top:358.14px;font-size:20.4px;color:#000;font-weight:bold;">Part No.</div>
<div class="t" style="left:944.4px;top:358.14px;font-size:20.4px;color:#000;font-weight:bold;">Description</div>
<div class="t" style="left:1233.07px;top:358.14px;font-size:20.4px;color:#000;font-weight:bold;">Q'ty</div>
<div class="t" style="left:1291.44px;top:358.14px;font-size:20.4px;color:#000;font-weight:bold;">S.No.</div>
<div class="t" style="left:1363.44px;top:358.14px;font-size:20.4px;color:#000;font-weight:bold;">I/C</div>
<div class="t" style="left:1409.44px;top:358.14px;font-size:20.4px;color:#000;font-weight:bold;">REMARKS</div>
<div class="t" style="left:1532.69px;top:358.14px;font-size:20.4px;color:#000;font-weight:bold;">Weight</div>
<div class="t" style="left:1620.69px;top:358.14px;font-size:20.4px;color:#000;font-weight:bold;">Weight</div>
<div class="t" style="left:1544.42px;top:383.14px;font-size:20.4px;color:#000;font-weight:bold;">(kgf)</div>
<div class="t" style="left:1638.64px;top:383.14px;font-size:20.4px;color:#000;font-weight:bold;">(lb)</div>
<div class="t" style="left:551.5px;top:408.84px;font-size:20.4px;color:#000;font-weight:bold;">010</div>
<div class="t" style="left:646.37px;top:408.84px;font-size:20.4px;color:#000;font-weight:bold;">75538-68302</div>
<div class="t" style="left:787.5px;top:408.84px;font-size:20.4px;color:#000;font-weight:bold;">TUBE 1 DELIVERY</div>
<div class="t" style="left:1233.5px;top:408.84px;font-size:20.4px;color:#000;font-weight:bold;">1</div>
<div class="t" style="left:1532.5px;top:408.84px;font-size:20.4px;color:#000;font-weight:bold;">0.34</div>
<div class="t" style="left:1620.5px;top:408.84px;font-size:20.4px;color:#000;font-weight:bold;">0.748</div>
<div class="t" style="left:551.5px;top:434.15px;font-size:20.4px;color:#000;font-weight:bold;">020</div>
<div class="t" style="left:646.37px;top:434.15px;font-size:20.4px;color:#000;font-weight:bold;">75538-68370</div>
<div class="t" style="left:787.5px;top:434.15px;font-size:20.4px;color:#000;font-weight:bold;">TUBE 2 DELIVERY</div>
<div class="t" style="left:1233.5px;top:434.15px;font-size:20.4px;color:#000;font-weight:bold;">1</div>
<div class="t" style="left:1532.5px;top:434.15px;font-size:20.4px;color:#000;font-weight:bold;">0.11</div>
<div class="t" style="left:1620.5px;top:434.15px;font-size:20.4px;color:#000;font-weight:bold;">0.242</div>
<div class="t" style="left:551.5px;top:459.46px;font-size:20.4px;color:#000;font-weight:bold;">030</div>
<div class="t" style="left:646.37px;top:459.46px;font-size:20.4px;color:#000;font-weight:bold;">75538-68402</div>
<div class="t" style="left:787.5px;top:459.46px;font-size:20.4px;color:#000;font-weight:bold;">TUBE 1 PUMP</div>
<div class="t" style="left:1233.5px;top:459.46px;font-size:20.4px;color:#000;font-weight:bold;">1</div>
<div class="t" style="left:1532.5px;top:459.46px;font-size:20.4px;color:#000;font-weight:bold;">0.3</div>
<div class="t" style="left:1620.5px;top:459.46px;font-size:20.4px;color:#000;font-weight:bold;">0.66</div>
<div class="t" style="left:551.5px;top:484.77px;font-size:20.4px;color:#000;font-weight:bold;">040</div>
<div class="t" style="left:646.37px;top:484.77px;font-size:20.4px;color:#000;font-weight:bold;">75538-35470</div>
<div class="t" style="left:787.5px;top:484.77px;font-size:20.4px;color:#000;font-weight:bold;">TUBE 2 PUMP</div>
<div class="t" style="left:1233.5px;top:484.77px;font-size:20.4px;color:#000;font-weight:bold;">1</div>
<div class="t" style="left:1532.5px;top:484.77px;font-size:20.4px;color:#000;font-weight:bold;">0.16</div>
<div class="t" style="left:1620.5px;top:484.77px;font-size:20.4px;color:#000;font-weight:bold;">0.352</div>
<div class="t" style="left:551.5px;top:510.08px;font-size:20.4px;color:#000;font-weight:bold;">050</div>
<div class="t" style="left:646.37px;top:510.08px;font-size:20.4px;color:#000;font-weight:bold;">99999-99999</div>
<div class="t" style="left:787.5px;top:510.08px;font-size:20.4px;color:#000;font-weight:bold;">BLANK</div>
<div class="t" style="left:1233.5px;top:510.08px;font-size:20.4px;color:#000;font-weight:bold;">0</div>
<div class="t" style="left:1532.5px;top:510.08px;font-size:20.4px;color:#000;font-weight:bold;">0</div>
<div class="t" style="left:1620.5px;top:510.08px;font-size:20.4px;color:#000;font-weight:bold;">0</div>
<div class="t" style="left:551.5px;top:535.39px;font-size:20.4px;color:#000;font-weight:bold;">060</div>
<div class="t" style="left:646.37px;top:535.39px;font-size:20.4px;color:#000;font-weight:bold;">75538-68500</div>
<div class="t" style="left:787.5px;top:535.39px;font-size:20.4px;color:#000;font-weight:bold;">TUBE 1 RETURN</div>
<div class="t" style="left:1233.5px;top:535.39px;font-size:20.4px;color:#000;font-weight:bold;">1</div>
<div class="t" style="left:1532.5px;top:535.39px;font-size:20.4px;color:#000;font-weight:bold;">0.35</div>
<div class="t" style="left:1620.5px;top:535.39px;font-size:20.4px;color:#000;font-weight:bold;">0.77</div>
<div class="t" style="left:551.5px;top:560.70px;font-size:20.4px;color:#000;font-weight:bold;">070</div>
<div class="t" style="left:646.37px;top:560.70px;font-size:20.4px;color:#000;font-weight:bold;">75538-35572</div>
<div class="t" style="left:787.5px;top:560.70px;font-size:20.4px;color:#000;font-weight:bold;">TUBE 2 RETURN</div>
<div class="t" style="left:1233.5px;top:560.70px;font-size:20.4px;color:#000;font-weight:bold;">1</div>
<div class="t" style="left:1532.5px;top:560.70px;font-size:20.4px;color:#000;font-weight:bold;">0.115</div>
<div class="t" style="left:1620.5px;top:560.70px;font-size:20.4px;color:#000;font-weight:bold;">0.253</div>
<div class="t" style="left:551.5px;top:586.01px;font-size:20.4px;color:#000;font-weight:bold;">080</div>
<div class="t" style="left:646.37px;top:586.01px;font-size:20.4px;color:#000;font-weight:bold;">99999-99999</div>
<div class="t" style="left:787.5px;top:586.01px;font-size:20.4px;color:#000;font-weight:bold;">BLANK</div>
<div class="t" style="left:1233.5px;top:586.01px;font-size:20.4px;color:#000;font-weight:bold;">0</div>
<div class="t" style="left:1532.5px;top:586.01px;font-size:20.4px;color:#000;font-weight:bold;">0</div>
<div class="t" style="left:1620.5px;top:586.01px;font-size:20.4px;color:#000;font-weight:bold;">0</div>
<div class="t" style="left:551.5px;top:611.32px;font-size:20.4px;color:#000;font-weight:bold;">090</div>
<div class="t" style="left:646.37px;top:611.32px;font-size:20.4px;color:#000;font-weight:bold;">99999-99999</div>
<div class="t" style="left:787.5px;top:611.32px;font-size:20.4px;color:#000;font-weight:bold;">BLANK</div>
<div class="t" style="left:1233.5px;top:611.32px;font-size:20.4px;color:#000;font-weight:bold;">0</div>
<div class="t" style="left:1532.5px;top:611.32px;font-size:20.4px;color:#000;font-weight:bold;">0</div>
<div class="t" style="left:1620.5px;top:611.32px;font-size:20.4px;color:#000;font-weight:bold;">0</div>
<div class="t" style="left:551.5px;top:636.63px;font-size:20.4px;color:#000;font-weight:bold;">100</div>
<div class="t" style="left:646.37px;top:636.63px;font-size:20.4px;color:#000;font-weight:bold;">75538-68610</div>
<div class="t" style="left:787.5px;top:636.63px;font-size:20.4px;color:#000;font-weight:bold;">CLAMP TUBE</div>
<div class="t" style="left:1233.5px;top:636.63px;font-size:20.4px;color:#000;font-weight:bold;">2</div>
<div class="t" style="left:1532.5px;top:636.63px;font-size:20.4px;color:#000;font-weight:bold;">0.06</div>
<div class="t" style="left:1620.5px;top:636.63px;font-size:20.4px;color:#000;font-weight:bold;">0.132</div>
<div class="t" style="left:551.5px;top:661.94px;font-size:20.4px;color:#000;font-weight:bold;">110</div>
<div class="t" style="left:646.37px;top:661.94px;font-size:20.4px;color:#000;font-weight:bold;">01053-50625</div>
<div class="t" style="left:787.5px;top:661.94px;font-size:20.4px;color:#000;font-weight:bold;">BOLT</div>
<div class="t" style="left:1233.5px;top:661.94px;font-size:20.4px;color:#000;font-weight:bold;">4</div>
<div class="t" style="left:1532.5px;top:661.94px;font-size:20.4px;color:#000;font-weight:bold;">0.007</div>
<div class="t" style="left:1620.5px;top:661.94px;font-size:20.4px;color:#000;font-weight:bold;">0.0154</div>
<div class="t" style="left:551.5px;top:687.25px;font-size:20.4px;color:#000;font-weight:bold;">120</div>
<div class="t" style="left:646.37px;top:687.25px;font-size:20.4px;color:#000;font-weight:bold;">04512-60060</div>
<div class="t" style="left:787.5px;top:687.25px;font-size:20.4px;color:#000;font-weight:bold;">WASHER SPRING</div>
<div class="t" style="left:1233.5px;top:687.25px;font-size:20.4px;color:#000;font-weight:bold;">4</div>
<div class="t" style="left:1532.5px;top:687.25px;font-size:20.4px;color:#000;font-weight:bold;">0.001</div>
<div class="t" style="left:1620.5px;top:687.25px;font-size:20.4px;color:#000;font-weight:bold;">0.0022</div>
<div class="t" style="left:551.5px;top:712.56px;font-size:20.4px;color:#000;font-weight:bold;">130</div>
<div class="t" style="left:646.37px;top:712.56px;font-size:20.4px;color:#000;font-weight:bold;">75582-66360</div>
<div class="t" style="left:787.5px;top:712.56px;font-size:20.4px;color:#000;font-weight:bold;">BAND</div>
<div class="t" style="left:1233.5px;top:712.56px;font-size:20.4px;color:#000;font-weight:bold;">1</div>
<div class="t" style="left:1532.5px;top:712.56px;font-size:20.4px;color:#000;font-weight:bold;">0.02</div>
<div class="t" style="left:1620.5px;top:712.56px;font-size:20.4px;color:#000;font-weight:bold;">0.044</div>
<div class="t" style="left:551.5px;top:737.87px;font-size:20.4px;color:#000;font-weight:bold;">140</div>
<div class="t" style="left:646.37px;top:737.87px;font-size:20.4px;color:#000;font-weight:bold;">75538-68110</div>
<div class="t" style="left:787.5px;top:737.87px;font-size:20.4px;color:#000;font-weight:bold;">BLOCK HYDRAULIC</div>
<div class="t" style="left:1233.5px;top:737.87px;font-size:20.4px;color:#000;font-weight:bold;">1</div>
<div class="t" style="left:1532.5px;top:737.87px;font-size:20.4px;color:#000;font-weight:bold;">0.286</div>
<div class="t" style="left:1620.5px;top:737.87px;font-size:20.4px;color:#000;font-weight:bold;">0.6292</div>
<div class="t" style="left:551.5px;top:763.18px;font-size:20.4px;color:#000;font-weight:bold;">150</div>
<div class="t" style="left:646.37px;top:763.18px;font-size:20.4px;color:#000;font-weight:bold;">75538-68130</div>
<div class="t" style="left:787.5px;top:763.18px;font-size:20.4px;color:#000;font-weight:bold;">O RING</div>
<div class="t" style="left:1233.5px;top:763.18px;font-size:20.4px;color:#000;font-weight:bold;">2</div>
<div class="t" style="left:1532.5px;top:763.18px;font-size:20.4px;color:#000;font-weight:bold;">0.011</div>
<div class="t" style="left:1620.5px;top:763.18px;font-size:20.4px;color:#000;font-weight:bold;">0.0242</div>
<div class="t" style="left:551.5px;top:788.49px;font-size:20.4px;color:#000;font-weight:bold;">160</div>
<div class="t" style="left:646.37px;top:788.49px;font-size:20.4px;color:#000;font-weight:bold;">01053-50840</div>
<div class="t" style="left:787.5px;top:788.49px;font-size:20.4px;color:#000;font-weight:bold;">BOLT</div>
<div class="t" style="left:1233.5px;top:788.49px;font-size:20.4px;color:#000;font-weight:bold;">2</div>
<div class="t" style="left:1532.5px;top:788.49px;font-size:20.4px;color:#000;font-weight:bold;">0.018</div>
<div class="t" style="left:1620.5px;top:788.49px;font-size:20.4px;color:#000;font-weight:bold;">0.0396</div>
<div class="t" style="left:551.5px;top:813.80px;font-size:20.4px;color:#000;font-weight:bold;">170</div>
<div class="t" style="left:646.37px;top:813.80px;font-size:20.4px;color:#000;font-weight:bold;">04512-60080</div>
<div class="t" style="left:787.5px;top:813.80px;font-size:20.4px;color:#000;font-weight:bold;">WASHER SPRING</div>
<div class="t" style="left:1233.5px;top:813.80px;font-size:20.4px;color:#000;font-weight:bold;">2</div>
<div class="t" style="left:1532.5px;top:813.80px;font-size:20.4px;color:#000;font-weight:bold;">0.002</div>
<div class="t" style="left:1620.5px;top:813.80px;font-size:20.4px;color:#000;font-weight:bold;">0.0044</div>
<div class="t" style="left:551.5px;top:839.11px;font-size:20.4px;color:#000;font-weight:bold;">180</div>
<div class="t" style="left:646.37px;top:839.11px;font-size:20.4px;color:#000;font-weight:bold;">75538-68150</div>
<div class="t" style="left:787.5px;top:839.11px;font-size:20.4px;color:#000;font-weight:bold;">JOINT ELBOW</div>
<div class="t" style="left:1233.5px;top:839.11px;font-size:20.4px;color:#000;font-weight:bold;">2</div>
<div class="t" style="left:1532.5px;top:839.11px;font-size:20.4px;color:#000;font-weight:bold;">0.034</div>
<div class="t" style="left:1620.5px;top:839.11px;font-size:20.4px;color:#000;font-weight:bold;">0.0748</div>
<div class="t" style="left:551.5px;top:864.42px;font-size:20.4px;color:#000;font-weight:bold;">190</div>
<div class="t" style="left:646.37px;top:864.42px;font-size:20.4px;color:#000;font-weight:bold;">75595-64200</div>
<div class="t" style="left:787.5px;top:864.42px;font-size:20.4px;color:#000;font-weight:bold;">ASSY ELBOW ADJUSTA</div>
<div class="t" style="left:1233.5px;top:864.42px;font-size:20.4px;color:#000;font-weight:bold;">1</div>
<div class="t" style="left:1532.5px;top:864.42px;font-size:20.4px;color:#000;font-weight:bold;">0.52</div>
<div class="t" style="left:1620.5px;top:864.42px;font-size:20.4px;color:#000;font-weight:bold;">1.144</div>
<svg style="left:1887px;top:134px" width="25" height="24" viewBox="0 0 25 24"><circle cx="10" cy="10" r="8" fill="none" stroke="#cfcfcf" stroke-width="2"/><path d="M15.5 15.5l6.5 6.5" stroke="#cfcfcf" stroke-width="2.4"/><path d="M9 6.5v7l-3.5-3.5zM11 6.5v7l3.5-3.5z" fill="#cfcfcf"/></svg>
<div class="a" style="left:1880px;top:170px;width:32px;height:1px;background:#3a3a3a"></div>
<svg style="left:1886px;top:182px" width="24" height="24" viewBox="0 0 24 24"><path d="M2 1h10l5 5v6M2 1v21h8" fill="none" stroke="#2ec4d0" stroke-width="1.8"/><path d="M6 16c2-2 3-5 3-8c0 3 1.5 5 4 6" fill="none" stroke="#2ec4d0" stroke-width="1"/><circle cx="17.5" cy="17.5" r="6" fill="#2ec4d0"/><path d="M14.5 17.5h5M17.5 15l2.5 2.5-2.5 2.5" fill="none" stroke="#4f4f4f" stroke-width="1.6"/></svg>
<svg style="left:1886px;top:229px" width="24" height="24" viewBox="0 0 24 24"><rect x="1" y="1" width="20" height="8" fill="none" stroke="#ea6fb6" stroke-width="1.8"/><rect x="1" y="13" width="9" height="8" fill="none" stroke="#ea6fb6" stroke-width="1.8"/><path d="M13 14h9M13 17.5h9M13 21h9" stroke="#ea6fb6" stroke-width="1.2"/></svg>
<svg style="left:1886px;top:275px" width="24" height="24" viewBox="0 0 24 24"><path d="M2 1h10l5 5v6M2 1v21h8" fill="none" stroke="#f06a78" stroke-width="1.8"/><path d="M6 16c2-2 3-5 3-8c0 3 1.5 5 4 6" fill="none" stroke="#f06a78" stroke-width="1"/><circle cx="17.5" cy="17.5" r="6" fill="#f06a78"/><path d="M14.5 17.5h6M17.5 14.5v6" stroke="#4f4f4f" stroke-width="1.6"/></svg>
<svg style="left:1886px;top:322px" width="24" height="24" viewBox="0 0 24 24"><path d="M1.5 1.5h19v14h-11l-3.5 4v-4h-4.5z" fill="none" stroke="#f2d21b" stroke-width="1.8"/><path d="M5 6h12M5 10h9" stroke="#f2d21b" stroke-width="1.8"/></svg>
<svg style="left:1886px;top:367px" width="24" height="24" viewBox="0 0 24 24"><path d="M2 1h8l3 3v12h-11z" fill="none" stroke="#8f8cf4" stroke-width="1.8"/><path d="M13 2h6l4 4v13h-10z" fill="#8f8cf4"/><path d="M4 13c1.5-1.5 2.3-4 2.3-6c0 2 1 3.5 3 4.5" fill="none" stroke="#8f8cf4" stroke-width="1"/><path d="M7 20l4 4 4-4z" fill="#8f8cf4"/><path d="M11 16v6" stroke="#8f8cf4" stroke-width="2"/></svg>
<svg style="left:1886px;top:413px" width="24" height="24" viewBox="0 0 24 24"><rect x="12" y="1" width="9" height="20" fill="none" stroke="#7ed35b" stroke-width="1.8"/><path d="M1 8v13h8M1 8h3M6 8h2" fill="none" stroke="#7ed35b" stroke-width="1.8" stroke-dasharray="3 2"/><path d="M9 3L5 7M5 3.5V7h3.5" fill="none" stroke="#7ed35b" stroke-width="1.5"/></svg>
<svg style="left:1886px;top:459px" width="24" height="24" viewBox="0 0 24 24"><path d="M5 1h14v20h-14z" fill="none" stroke="#2ec4d0" stroke-width="1.8"/><path d="M1 7l3.5 4-3.5 4M23 7l-3.5 4 3.5 4" fill="none" stroke="#2ec4d0" stroke-width="1.6"/><path d="M8.5 16c2-2 3-4 3-7c0 3 1.5 5 4 6" fill="none" stroke="#2ec4d0" stroke-width="1"/></svg>
<svg style="left:1886px;top:505px" width="24" height="24" viewBox="0 0 24 24"><path d="M5 17L16 4a2.5 2.5 0 0 1 3.5 3.5L9 19z" fill="none" stroke="#ea6fb6" stroke-width="1.8"/><path d="M1 21l4-4 4 2v2z" fill="#ea6fb6"/><rect x="12" y="17" width="10" height="4" fill="#ea6fb6"/></svg>
<svg style="left:1886px;top:550px" width="24" height="24" viewBox="0 0 24 24"><path d="M11 1.5c3 2 6 2.5 9 2.5v8c0 5-4 8-9 10.5c-5-2.5-9-5.5-9-10.5v-8c3 0 6-0.5 9-2.5z" fill="none" stroke="#8a8cf2" stroke-width="1.8"/></svg>
<svg style="left:1886px;top:596px" width="24" height="24" viewBox="0 0 24 24"><path d="M2 20l2-5L15 3a2.5 2.5 0 0 1 3.5 3.5L7 18z" fill="none" stroke="#b07cf0" stroke-width="1.8"/><path d="M1 21.5h3M10 21c1-2 2-3 2.5-1.5s1.5 1.5 2.5-0.5 2 0 3 1.5 2 0 3-1" fill="none" stroke="#b07cf0" stroke-width="1.5"/></svg>
<svg style="left:1886px;top:642px" width="24" height="24" viewBox="0 0 24 24"><path d="M2 1h9l5 5v5M2 1v21h8" fill="none" stroke="#f2d21b" stroke-width="1.8"/><path d="M11 1v5h5" fill="none" stroke="#f2d21b" stroke-width="1.5"/><path d="M12 12h11v8h-6l-3 3v-3h-2z" fill="#f2d21b"/><path d="M14.5 15h6M14.5 17.5h6" stroke="#4f4f4f" stroke-width="1"/></svg>
<svg style="left:1886px;top:688px" width="24" height="24" viewBox="0 0 24 24"><path d="M3 20L11 12" stroke="#bdbdbd" stroke-width="3.2" stroke-linecap="round"/><path d="M9.5 9a5 5 0 0 1 6.5-6.5l-3 3 0.8 2.2 2.2 0.8 3-3a5 5 0 0 1-6.5 6.5z" fill="#bdbdbd"/><circle cx="17.5" cy="17.5" r="6" fill="#bdbdbd" stroke="#4f4f4f" stroke-width="1"/><path d="M14.5 17.5h6M17.5 14.5v6" stroke="#4f4f4f" stroke-width="1.6"/></svg>
<div class="a" style="left:1882px;top:1033px;width:32px;height:1px;background:#3a3a3a"></div>
<svg style="left:1892px;top:1048px" width="16" height="17" viewBox="0 0 16 17"><path d="M1.5 1v15" stroke="#cfcfcf" stroke-width="2.2"/><path d="M5 8.5h9M10 4.5l4 4-4 4" fill="none" stroke="#cfcfcf" stroke-width="2"/></svg>
<div class="a" style="left:0px;top:1078px;width:1920px;height:2px;background:#fff"></div></body></html>
